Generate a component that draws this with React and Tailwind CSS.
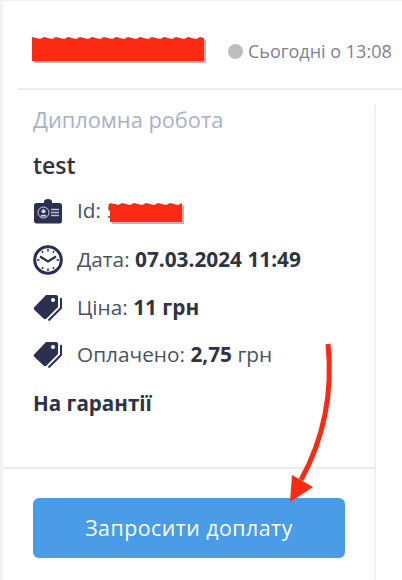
import React from 'react';

const IdIcon = () => (
  <svg width="30" height="26" viewBox="0 0 30 26" className="shrink-0">
    <path d="M11 5V3.500C11 2 12.500 1 15 1s4 1 4 2.500V5h7.500c1.500 0 2.500 1 2.500 2.500V23c0 1.500-1 2.500-2.500 2.500h-23C2 25.500 1 24.500 1 23V7.500C1 6 2 5 3.500 5z" fill="#2b3050" />
    <circle cx="10.500" cy="14.500" r="5.500" fill="none" stroke="#d5d7e0" strokeWidth="1" />
    <circle cx="10.500" cy="13.200" r="2" fill="#d5d7e0" />
    <path d="M7 18.500c.7-2.500 6.300-2.500 7 0z" fill="#d5d7e0" />
    <path d="M18 11.500h8M18 14.500h8M18 17.500h8" stroke="#b9bcca" strokeWidth="1.600" />
  </svg>
);

const ClockIcon = () => (
  <svg width="30" height="30" viewBox="0 0 30 30" className="shrink-0">
    <circle cx="15" cy="15" r="13.300" fill="none" stroke="#2b3050" strokeWidth="3" />
    <path d="M15 4v2.500M15 23.500V26M4 15h2.500M23.500 15H26M9 6l1 2M21 6l-1 2M9 24l1-2M21 24l-1-2" stroke="#2b3050" strokeWidth="1.500" />
    <path d="M7 11.500 15 16.500 23 11.500" fill="none" stroke="#2b3050" strokeWidth="2.200" />
  </svg>
);

const TagsIcon = () => (
  <svg width="30" height="28" viewBox="0 0 30 28" className="shrink-0">
    <path d="M13 1h10c1.200 0 2 .8 2 2v10L13.500 24.500c-.9.9-2.100.9-3 0L1.500 16c-.9-.9-.9-2.100 0-3z" fill="#2b3050" />
    <circle cx="20" cy="6" r="2" fill="#fff" />
    <path d="M28 4v10L15.500 26.500" fill="none" stroke="#2b3050" strokeWidth="2" />
  </svg>
);

const Row = ({ icon, className, children }) => (
  <div className={`flex h-[30px] items-center gap-[14px] text-[20.800px] text-[#4c5160] ${className}`}>
    <span className="flex w-[30px] justify-center">{icon}</span>
    <span>{children}</span>
  </div>
);

// rough marker stroke hiding private data
const Scribble = ({ width, height, className }) => {
  const top = [];
  const bottom = [];
  for (let x = 0; x <= width; x += 4) {
    top.push(`${x},${(x * 7) % 3}`);
    bottom.unshift(`${x},${height - ((x * 5) % 4)}`);
  }
  return (
    <svg width={width + 4} height={height + 4} className={`absolute ${className}`}>
      <polygon points={`${top.join(' ')} ${bottom.join(' ')}`} fill="#6b6b6b" opacity="0.5" transform="translate(2 2)" />
      <polygon points={`${top.join(' ')} ${bottom.join(' ')}`} fill="#fb2a12" />
    </svg>
  );
};

export default function App() {
  return (
    <div className="relative h-[580px] w-[402px] overflow-hidden bg-[#f1f1f1] pt-px pl-[3px] font-['Open_Sans',sans-serif]">
      <div className="flex h-full flex-col bg-white">
        <div className="ml-[15px] flex h-[89px] items-center border-b-2 border-[#ececec] pt-[14px] pl-[15px] whitespace-nowrap">
          <span className="w-[195px] text-[18px] font-semibold text-[#2f3342]">А</span>
          <span className="h-[15px] w-[15px] rounded-full bg-[#bdbdbd]" />
          <span className="ml-[5px] text-[18px] text-[#7d8290]">Сьогодні о 13:08</span>
        </div>

        <div className="flex flex-1">
          <div className="mt-[15px] flex w-[373px] flex-col border-r-2 border-[#efefef]">
            <div className="flex h-[362px] flex-col pl-[30px]">
              <div className="mt-[1px] text-[21.800px] leading-[28px] text-[#a6b2c6]">Дипломна робота</div>
              <div className="mt-[17px] text-[23px] leading-[28px] font-semibold text-[#2f3342]">test</div>
              <Row icon={<IdIcon />} className="mt-[17px]">
                <>Id: 5</>
              </Row>
              <Row icon={<ClockIcon />} className="mt-[19px]">
                <>Дата: <b className="font-bold text-[#2f3342]">07.03.2024 11:49</b></>
              </Row>
              <Row icon={<TagsIcon />} className="mt-[18px]">
                <>Ціна: <b className="font-bold text-[#2f3342]">11 грн</b></>
              </Row>
              <Row icon={<TagsIcon />} className="mt-[17px]">
                <>Оплачено: <b className="font-bold text-[#2f3342]">2,75</b> грн</>
              </Row>
              <div className="mt-[18px] text-[20.600px] leading-[30px] font-bold text-[#2f3342]">На гарантії</div>
            </div>
            <div className="border-t-2 border-[#ececec] pt-[29px] pl-[30px]">
              <button className="h-[60px] w-[312px] rounded-[6px] bg-[#499ce5] text-[21.300px] tracking-[0.5px] text-white">
                Запросити доплату
              </button>
            </div>
          </div>
        </div>
      </div>

      <Scribble width={175} height={24} className="left-[32px] top-[37px]" />
      <Scribble width={74} height={19} className="left-[110px] top-[203px]" />

      <svg width="60" height="170" viewBox="0 0 60 170" className="absolute left-[280px] top-[338px]">
        <path d="M48 6C53 55 44 100 21 142" fill="none" stroke="#fb2a12" strokeWidth="5" />
        <path d="M10 164 12 137 33 149z" fill="#fb2a12" />
      </svg>
    </div>
  );
}
